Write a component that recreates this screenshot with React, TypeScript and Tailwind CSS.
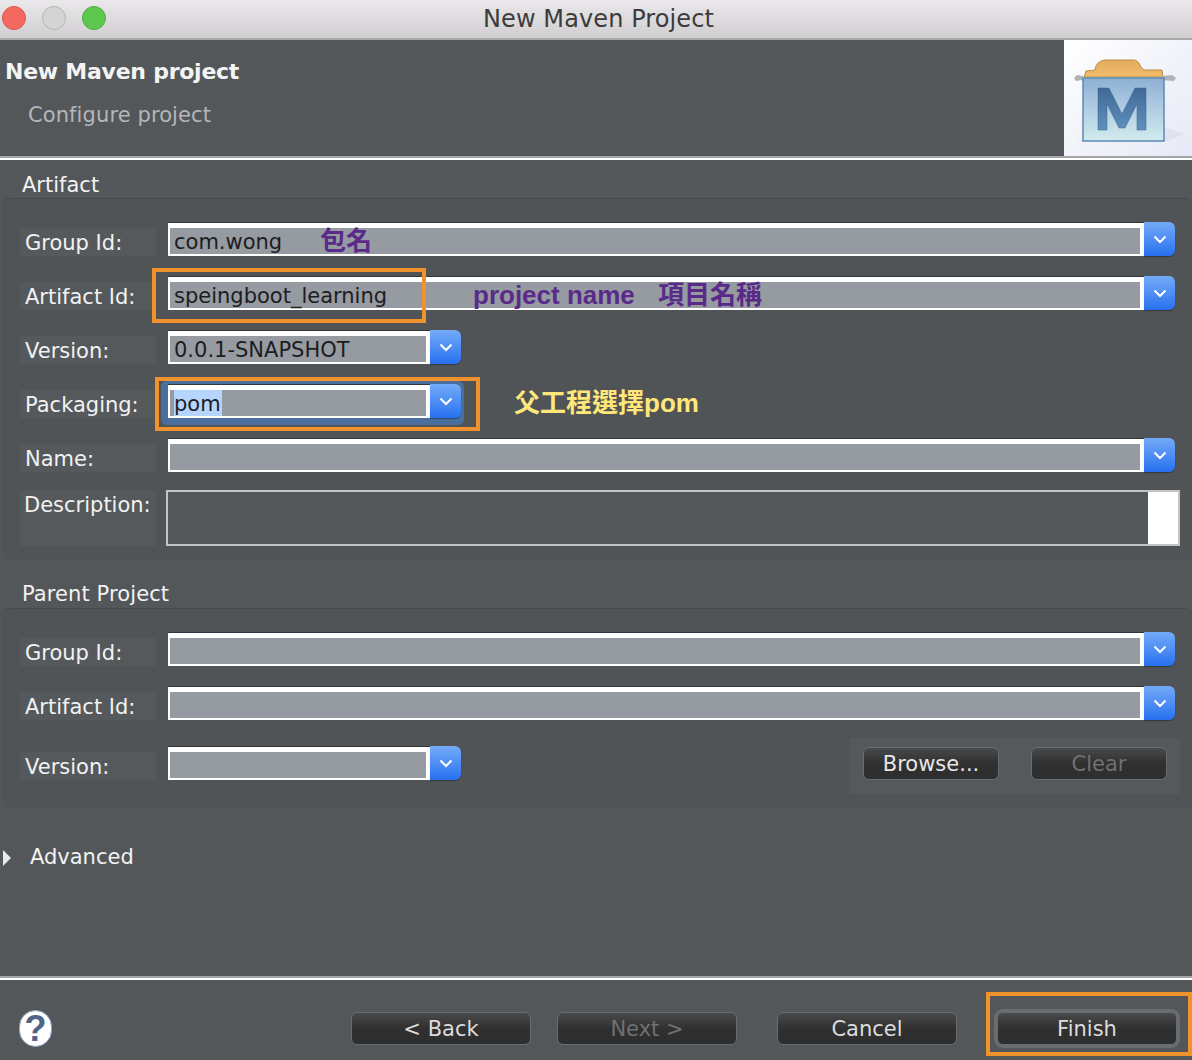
import React from 'react';

const FONT = "font-['DejaVu_Sans','Liberation_Sans',sans-serif]";

const Chevron = () => (
  <svg width="14" height="9" viewBox="0 0 14 9" fill="none">
    <path d="M1.5 1.5l5.5 5.5 5.5-5.5" stroke="#ffffff" strokeWidth="2" />
  </svg>
);

function ComboButton() {
  return (
    <div className="flex h-[34px] w-[31px] shrink-0 items-center justify-center rounded-r-[6px] bg-gradient-to-b from-[#74abf8] to-[#2670f0] shadow-[0_1px_1px_rgba(0,0,0,0.35)]">
      <Chevron />
    </div>
  );
}

function Combo({ text, short, selected }: { text?: string; short?: boolean; selected?: boolean }) {
  return (
    <div className={short ? 'flex w-[293px] shrink-0' : 'flex flex-1'}>
      <div className="flex h-[34px] flex-1 flex-col border-t border-[#33363a] bg-white pt-[5px] pr-[4px] pb-[1px] pl-[2px]">
        <div className="flex h-[26px] items-center bg-[#969ba1] pl-[4px] text-[21px] text-[#1d1d1f]">
          <span className={`flex h-[26px] items-center pt-[4px] ${selected ? 'bg-[#b5d5ff] pr-[1px]' : ''}`}>{text}</span>
        </div>
      </div>
      <ComboButton />
    </div>
  );
}

function Row({ label, children, top }: { label: string; children: React.ReactNode; top: string }) {
  return (
    <div className={`flex items-end pr-[17px] pl-[18px] ${top}`}>
      <div className="mr-[12px] flex h-[28px] w-[136px] shrink-0 items-center bg-[#55595c] pt-[4px] pl-[5px] text-[21px] text-[#f2f2f2]">
        {label}
      </div>
      {children}
    </div>
  );
}

function WizardButton({ label, disabled, className }: { label: string; disabled?: boolean; className?: string }) {
  return (
    <button
      className={`flex h-[33px] w-[180px] items-center justify-center rounded-[6px] border border-[#6a6d70] bg-gradient-to-b from-[#4a4a4a] via-[#303030] to-[#2e2e2e] pt-[3px] text-[21px] ${
        disabled ? 'text-[#6f7173]' : 'text-[#dcdcdc]'
      } ${className ?? ''}`}
    >
      {label}
    </button>
  );
}

function Separator() {
  return (
    <div className="shrink-0">
      <div className="h-[2px] bg-[#a5a5a5]" />
      <div className="h-[2px] bg-white" />
    </div>
  );
}

function MavenIcon() {
  return (
    <svg width="128" height="116" viewBox="0 0 128 116">
      <defs>
        <linearGradient id="bg" x1="0" y1="0" x2="1" y2="1">
          <stop offset="0" stopColor="#ffffff" />
          <stop offset="1" stopColor="#e6e9f6" />
        </linearGradient>
        <linearGradient id="box" x1="0" y1="0" x2="0" y2="1">
          <stop offset="0" stopColor="#8fb0d6" />
          <stop offset="1" stopColor="#d2ebef" />
        </linearGradient>
        <linearGradient id="lid" x1="0" y1="0" x2="0" y2="1">
          <stop offset="0" stopColor="#e2aa5c" />
          <stop offset="1" stopColor="#f0bd6c" />
        </linearGradient>
        <linearGradient id="em" x1="0" y1="0" x2="0" y2="1">
          <stop offset="0" stopColor="#3f6a98" />
          <stop offset="1" stopColor="#6090bd" />
        </linearGradient>
      </defs>
      <rect width="128" height="116" fill="url(#bg)" />
      <path d="M10 101 L104 101 L120 94 L104 88 Z" fill="#cfd1de" opacity="0.35" />
      <path d="M20 37 L22 31 L31 30 Q32 21 41 20 L70 20 Q74 20 77 27 L80 30 L98 30 L99 37 Z" fill="url(#lid)" stroke="#b98f48" strokeWidth="1" />
      <path d="M10 38 L13 35 L19 36 L19 40 L12 41 Z M98 36 L108 35 L112 38 L110 41 L98 40 Z" fill="#aeb3ba" />
      <rect x="19" y="38" width="81" height="63" fill="url(#box)" stroke="#5d88b4" strokeWidth="1.5" />
      <path d="M34 48 L45 48 L58 74 L71 48 L82 48 L82 90 L73 90 L73 64 L61 88 L55 88 L43 64 L43 90 L34 90 Z" fill="url(#em)" stroke="#3f6287" strokeWidth="0.5" />
    </svg>
  );
}

function HelpIcon() {
  return (
    <div className="flex h-[37px] w-[33px] items-center justify-center rounded-full border-[1px] border-[#8ba0c0] bg-white font-['Liberation_Sans',sans-serif] text-[36px] leading-none font-bold text-[#4f6488]">
      ?
    </div>
  );
}

export default function App() {
  return (
    <div className={`relative flex h-[1060px] w-[1192px] flex-col overflow-hidden bg-[#53575a] ${FONT}`}>
      {/* title bar */}
      <div className="relative flex h-[40px] shrink-0 items-center justify-center border-b-2 border-[#a9a9a9] bg-gradient-to-b from-[#eae8ea] to-[#d0ced0] pl-[5px] text-[24px] tracking-[0.1px] text-[#3c3c3c]">
        <div className="absolute top-[6px] left-[2px] flex gap-[16px]">
          <div className="h-[24px] w-[24px] rounded-full border border-[#d9534a] bg-[#f4695f]" />
          <div className="h-[24px] w-[24px] rounded-full border border-[#b5b5b5] bg-[#d4d4d4]" />
          <div className="h-[24px] w-[24px] rounded-full border border-[#4aae3d] bg-[#5cc850]" />
        </div>
        New Maven Project
      </div>

      {/* header */}
      <div className="flex h-[116px] shrink-0">
        <div className="flex-1">
          <div className="mt-[17px] ml-[5px] text-[22px] leading-[30px] font-bold tracking-[-0.25px] text-[#f4f4f4]">New Maven project</div>
          <div className="mt-[14px] ml-[28px] text-[21px] leading-[28px] tracking-[0.1px] text-[#b4b6b8]">Configure project</div>
        </div>
        <MavenIcon />
      </div>
      <Separator />

      {/* artifact */}
      <div className="mt-[12px] ml-[22px] h-[26px] text-[21px] leading-[26px] text-[#f2f2f2]">Artifact</div>
      <div className="ml-[2px] h-[362px] shrink-0 rounded-[8px] border-t border-[#484b4e] bg-[#505457] pt-[23px]">
        <Row label="Group Id:" top="">
          <Combo text="com.wong" />
        </Row>
        <Row label="Artifact Id:" top="mt-[20px]">
          <Combo text="speingboot_learning" />
        </Row>
        <Row label="Version:" top="mt-[20px]">
          <Combo text="0.0.1-SNAPSHOT" short />
        </Row>
        <Row label="Packaging:" top="mt-[20px]">
          <div className="-mt-[3px] -mr-[3px] -mb-[7px] -ml-[7px] rounded-[6px] bg-[#4a6f9f] pt-[3px] pr-[3px] pb-[7px] pl-[7px]">
            <Combo text="pom" short selected />
          </div>
        </Row>
        <Row label="Name:" top="mt-[20px]">
          <Combo />
        </Row>
        <div className="mt-[18px] flex pr-[12px] pl-[18px]">
          <div className="mr-[10px] h-[56px] w-[136px] shrink-0 bg-[#55595c] pt-[1px] pl-[4px] text-[21px] leading-[28px] text-[#f2f2f2]">
            Description:
          </div>
          <div className="flex h-[56px] flex-1 justify-end border-2 border-[#c4c4c4] bg-[#53575a]">
            <div className="w-[30px] bg-white" />
          </div>
        </div>
      </div>

      {/* parent project */}
      <div className="mt-[21px] ml-[22px] h-[27px] text-[21px] leading-[27px] tracking-[0.1px] text-[#f2f2f2]">Parent Project</div>
      <div className="ml-[2px] h-[200px] shrink-0 rounded-[8px] border-t border-[#484b4e] bg-[#505457] pt-[23px]">
        <Row label="Group Id:" top="">
          <Combo />
        </Row>
        <Row label="Artifact Id:" top="mt-[20px]">
          <Combo />
        </Row>
        <div className="mt-[18px] flex items-start pr-[12px] pl-[18px]">
          <div className="mt-[14px] mr-[12px] flex h-[28px] w-[136px] shrink-0 items-center bg-[#55595c] pt-[4px] pl-[5px] text-[21px] text-[#f2f2f2]">
            Version:
          </div>
          <div className="mt-[8px]">
            <Combo short />
          </div>
          <div className="ml-auto flex h-[56px] w-[330px] items-start gap-[32px] bg-[#55595c] pt-[9px] pl-[13px]">
            <WizardButton label="Browse..." className="!w-[136px] !text-[#e6e6e6]" />
            <WizardButton label="Clear" disabled className="!w-[136px]" />
          </div>
        </div>
      </div>

      {/* advanced */}
      <div className="mt-[36px] flex h-[28px] items-center text-[21px] text-[#f2f2f2]">
        <div className="ml-[3px] h-0 w-0 border-y-[8px] border-l-[8px] border-y-transparent border-l-[#e8e8e8]" />
        <span className="ml-[19px]">Advanced</span>
      </div>

      <div className="flex-1" />
      <Separator />

      {/* footer */}
      <div className="flex h-[80px] shrink-0 items-center pt-[17px] pr-[15px] pl-[19px]">
        <HelpIcon />
        <div className="ml-auto flex gap-[40px]">
          <WizardButton label="< Back" className="-mr-[14px]" />
          <WizardButton label="Next >" disabled />
          <WizardButton label="Cancel" />
          <WizardButton label="Finish" className="shadow-[0_0_0_3px_#6a6d70]" />
        </div>
      </div>

      {/* annotations on the screenshot */}
      <div className="absolute top-[268px] left-[152px] h-[55px] w-[274px] border-[4px] border-[#f0932f]" />
      <div className="absolute top-[377px] left-[155px] h-[54px] w-[325px] border-[4px] border-[#f0932f]" />
      <div className="absolute top-[992px] left-[986px] h-[64px] w-[206px] border-[4px] border-[#f0932f]" />
      <div className="absolute top-[224px] left-[320px] font-['Noto_Sans_CJK_TC',sans-serif] text-[26px] leading-[30px] font-bold text-[#5a2a8a]">
        包名
      </div>
      <div className="absolute top-[280px] left-[473px] font-['Liberation_Sans','Noto_Sans_CJK_TC',sans-serif] text-[26px] leading-[30px] font-bold text-[#5a2a8a]">
        project name
      </div>
      <div className="absolute top-[278px] left-[658px] font-['Noto_Sans_CJK_TC',sans-serif] text-[26px] leading-[30px] font-bold text-[#5a2a8a]">
        項目名稱
      </div>
      <div className="absolute top-[388px] left-[514px] font-['Liberation_Sans','Noto_Sans_CJK_TC',sans-serif] text-[26px] leading-[30px] font-bold text-[#ffe77a]">
        父工程選擇pom
      </div>
    </div>
  );
}
